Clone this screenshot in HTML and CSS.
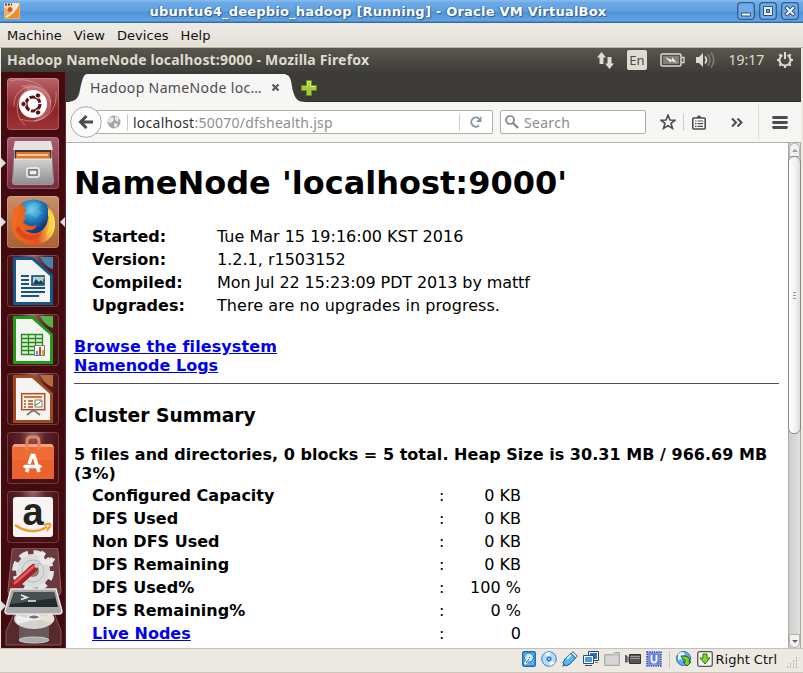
FILE: index.html
```html
<!DOCTYPE html>
<html lang="en">
<head>
<meta charset="utf-8">
<title>ubuntu64_deepbio_hadoop [Running] - Oracle VM VirtualBox</title>
<link rel="stylesheet" href="styles.css">
</head>
<body>
<div class="window">
  <header class="titlebar">
    <svg class="app-icon" width="16" height="16" viewBox="0 0 16 16"><rect width="16" height="16" fill="#e9ad68"/><path d="M0 0h16L9 8 5 8 0 4z" fill="#f7dfb8"/><path d="M1 14l4-4 4 1 6-9v13H1z" fill="#ee8b24"/><path d="M4 5l3 4 7-7M2 14l5-3 6-7" stroke="#fff2d6" stroke-width="2" fill="none"/><circle cx="6" cy="6.500" r="2.500" fill="#e34a1c"/><path d="M1 1.500h7" stroke="#444" stroke-width="2" stroke-dasharray="2 1"/></svg>
    <span class="title">ubuntu64_deepbio_hadoop [Running] - Oracle VM VirtualBox</span>
    <div class="controls">
      <svg width="18" height="18" viewBox="0 0 18 18"><rect class="ctl" x=".7" y=".7" width="16.600" height="16.600" rx="3"/><rect x="4.500" y="11" width="9" height="3" fill="#fff" stroke="#2b527d"/></svg>
      <svg width="18" height="18" viewBox="0 0 18 18"><rect class="ctl" x=".7" y=".7" width="16.600" height="16.600" rx="3"/><path d="M4.500 4.500h9v9h-9zM7.500 7.500v3h3v-3z" fill="#e4effb" stroke="#2b527d" fill-rule="evenodd"/></svg>
      <svg width="18" height="18" viewBox="0 0 18 18"><rect class="ctl" x=".7" y=".7" width="16.600" height="16.600" rx="3"/><path d="M6 6l6 6m0-6l-6 6" stroke="#2b527d" stroke-width="4" stroke-linecap="square"/><path d="M6 6l6 6m0-6l-6 6" stroke="#fff" stroke-width="2" stroke-linecap="square"/></svg>
    </div>
  </header>
  <nav class="menubar"><span>Machine</span><span>View</span><span>Devices</span><span>Help</span></nav>
  <div class="guest">
    <div class="panel">
      <span class="panel-title">Hadoop NameNode localhost:9000 - Mozilla Firefox</span>
      <div class="indicators">
        <svg class="net" width="18" height="18" viewBox="0 0 18 18"><path d="M5.500 0L10 5.500H7.500V12h-4V5.500H1zM13.500 17L9 11.500h2.500V5h4v6.500H18z" fill="#dfdbd2"/></svg>
        <span class="lang">En</span>
        <svg class="battery" width="25" height="14" viewBox="0 0 25 14"><rect x="1" y="1" width="20" height="12" rx="1.500" fill="none" stroke="#dfdbd2" stroke-width="1.500"/><rect x="3" y="3" width="16" height="8" fill="#817f77"/><path d="M22 4.500h2v5h-2" fill="none" stroke="#dfdbd2" stroke-width="1.300"/><path d="M5 4l7 3V4l5 6-6-2v2z" fill="#eeeae2"/></svg>
        <svg class="sound" width="21" height="18" viewBox="0 0 21 18"><path d="M1 6h3l4-4v14l-4-4H1z" fill="#dfdbd2"/><path d="M10 5.500q3 3.500 0 7" fill="none" stroke="#dfdbd2" stroke-width="1.800"/><path d="M13 3.500q4 5.500 0 11M16 1.500q5.500 7.500 0 15" fill="none" stroke="#807d75" stroke-width="1.600"/></svg>
        <span class="clock">19:17</span>
        <svg width="18" height="18" viewBox="0 0 18 18"><path d="M6.500 4.200a5.500 5.500 0 1 0 5 0" fill="none" stroke="#dfdbd2" stroke-width="2"/><path d="M9 1v7M1 9h3m10 0h3M3.300 3.300l2 2m7.400 0l2-2M3.300 14.700l2-2m7.400 0l2 2M9 14v3" stroke="#dfdbd2" stroke-width="2"/></svg>
      </div>
    </div>
    <div class="workspace">
      <aside class="launcher">
        <div class="tile red"><svg viewBox="0 0 52 52"><g fill="none" stroke="#e6b0b0" stroke-opacity=".55"><path d="M7 28C6 7 33 2 42 19c5 12-1 22-14 24"/><path d="M3 3c18-5 40 5 41 22M49 14c2 22-16 34-36 27M18 47C7 39 7 18 22 11"/></g><path d="M13 8c16-5 29 2 31 18-2 12-9 17-19 18 18-9 12-27-12-36z" fill="#e5aaa9" opacity=".4"/><circle cx="26" cy="26" r="14" fill="#fff"/><circle cx="26" cy="26" r="7" fill="none" stroke="#61131a" stroke-width="3.200" stroke-dasharray="13 1.660"/><g fill="#61131a" stroke="#fff"><circle cx="16.500" cy="26" r="2.700"/><circle cx="31" cy="17.500" r="2.700"/><circle cx="31" cy="34.500" r="2.700"/></g></svg></div>
        <div class="tile plum"><svg viewBox="0 0 52 52"><defs><linearGradient id="cab" x2="0" y2="1"><stop stop-color="#d2d2d2"/><stop offset="1" stop-color="#8f8f8f"/></linearGradient></defs><path d="M8 5h36l3 39q0 4-3 4H8q-3 0-3-4z" fill="#999"/><path d="M8 4h36l2 9H6z" fill="#e3e3e3"/><path d="M8 13h36v10H8z" fill="#4a3427"/><path d="M9 15h34v7H9z" fill="#db742d"/><path d="M10 18h31" stroke="#ffe4b7" stroke-width="1.500"/><path d="M7 22h38v25H7z" fill="url(#cab)"/><path d="M7 22h38" stroke="#eee"/><rect x="20" y="31" width="12" height="9" rx="2" fill="#aaa" stroke="#e3e3e3" stroke-width="2"/><rect x="22" y="33" width="8" height="5" fill="#eee" stroke="#555"/></svg><i class="run"></i></div>
        <div class="tile tan"><svg viewBox="0 0 52 52"><defs><radialGradient id="globe" cx=".45" cy=".25"><stop stop-color="#78cfee"/><stop offset=".45" stop-color="#258fca"/><stop offset="1" stop-color="#113b7f"/></radialGradient><linearGradient id="fox"><stop stop-color="#f36d20"/><stop offset=".6" stop-color="#e2501f"/><stop offset="1" stop-color="#fff05a"/></linearGradient></defs><circle cx="26.500" cy="23.500" r="20" fill="url(#globe)"/><path d="M27 6l8 2-4 5 4 4-6 5-5-4-8 1 5-8z" fill="#7bcbe8" opacity=".3"/><path d="M6 12c3 0 6-4 11-4-2 3 0 5 3 6l-4 5c5 0 2 5 0 7 4 4 8 5 14 3-1 5-7 6-12 5 9 7 22 2 23-12 2 1 2 3 2 5 2-6 0-13-4-18 7 5 9 12 9 20-1 26-42 27-43 0 0-6 1-12 1-17z" fill="url(#fox)"/><path d="M12 30c3 9 14 13 23 6-5 11-20 11-27-3z" fill="#dd481a"/><path d="M41 12c6 9 6 20-2 29 3-9 4-15 2-21z" fill="#ffd53b"/></svg><i class="run"></i><i class="focus"></i></div>
        <div class="tile dark"><svg viewBox="0 0 52 52"><path d="M6 2h20l20 18v30H6z" fill="#13598a"/><path d="M9 5h16l18 16v26H9z" fill="#f4f4f4"/><path d="M33 2h13v12q-8-2-13-12z" fill="#4884ad"/><path d="M14 21h8M14 25h8M14 29h8M14 33h24M14 37h24M14 41h18" stroke="#185480" stroke-width="2"/><path d="M25 21h12v9H25z" fill="#9fd8f5" stroke="#153d5b" stroke-width="1.500"/><path d="M26 29l3-5 3 3 2-2 3 4z" fill="#223e4b"/><circle cx="36" cy="23" r="1.300" fill="#eec22e"/></svg></div>
        <div class="tile dark"><svg viewBox="0 0 52 52"><path d="M6 2h20l20 18v30H6z" fill="#239b18"/><path d="M9 5h16l18 16v26H9z" fill="#f4f4f4"/><path d="M33 2h13v12q-8-2-13-12z" fill="#55b348"/><path d="M14.500 20.500h21v20h-21zM14 24.500h22M14 28.500h22M14 32.500h22M14 36.500h22M21.500 20v21M28.500 20v21" stroke="#228b19" stroke-width="1.300" fill="#dff2da"/><path d="M27.500 31.500h10v10h-10z" fill="#fff" stroke="#777"/><path d="M29 37h2v4h-2z" fill="#49a4d8"/><path d="M32 33h2v8h-2z" fill="#e33d20"/><path d="M35 36h2v5h-2z" fill="#ef9e20"/></svg></div>
        <div class="tile dark"><svg viewBox="0 0 52 52"><path d="M6 2h20l20 18v30H6z" fill="#a04a1b"/><path d="M9 5h16l18 16v26H9z" fill="#f4f4f4"/><path d="M33 2h13v12q-8-2-13-12z" fill="#b46b3d"/><rect x="14.700" y="20.700" width="23" height="16" fill="#fff4ec" stroke="#b34f25" stroke-width="1.500"/><path d="M17 24h18" stroke="#e66c30" stroke-width="2"/><path d="M17 28h2m2 0h5m-9 3h2m2 0h5m-9 3h2m2 0h5" stroke="#a95028" stroke-width="1.700"/><path d="M28 27h7v7h-7z" fill="#fff" stroke="#777"/><path d="M28 32l3-1 3-3" fill="none" stroke="#299b35"/><path d="M25 37v2m-5 3l5-4h3l5 4" stroke="#777" stroke-width="1.700" fill="none"/></svg></div>
        <div class="tile dark"><svg viewBox="0 0 52 52"><path d="M5 15h42v32H5z" fill="#ee6b35"/><path d="M5 15l2-3h38l2 3z" fill="#f7a27c"/><path d="M5 28h42v19H5z" fill="#e8602d" opacity=".65"/><path d="M20 18V9q0-4 4-4h4q4 0 4 4v9" fill="none" stroke="#e8835c" stroke-width="3"/><path d="M19.500 40l1.500-3.500M22 32l3-8.500h2L32 40" fill="none" stroke="#fff" stroke-width="3.500"/><path d="M18 34.500h15" stroke="#fff" stroke-width="3.500" stroke-linecap="round"/></svg></div>
        <div class="tile dark"><svg viewBox="0 0 52 52"><rect x="6" y="6" width="40" height="40" rx="3" fill="#f5f5f5"/><text x="26" y="34" class="amazon-a">a</text><path d="M8 34q16 11 32 2" fill="none" stroke="#f59a20" stroke-width="2.300"/><path d="M37 34q8-3 6 1l-3 5" fill="none" stroke="#f59a20" stroke-width="2"/></svg></div>
        <div class="stack"><svg viewBox="0 0 64 101" width="64" height="101"><path d="M9 2q0-2 2-2h42q2 0 2 2l3 41q0 4-3 4H8q-3 0-3-4z" fill="#6b3a3e" stroke="#8d6062"/><circle cx="30" cy="23" r="17" fill="#dadada"/><circle cx="30" cy="23" r="18.500" fill="none" stroke="#e5e5e5" stroke-width="5" stroke-dasharray="9 5.530"/><circle cx="30" cy="23" r="11" fill="none" stroke="#bbb"/><circle cx="30" cy="23" r="6" fill="#8e7777"/><path d="M12 37L31 20" stroke="#a51f28" stroke-width="8" stroke-linecap="round"/><path d="M12 35L30 19" stroke="#e25a58" stroke-width="3" stroke-linecap="round"/><path d="M32 19l10-8" stroke="#c9c9c9" stroke-width="4"/><path d="M41 4q-5 7 0 10 6 2 9-4" stroke="#e9e9e9" stroke-width="5" fill="none"/><path d="M13 62L3 83v14h55V83l-8-21z" fill="#572a2e" stroke="#80585a"/><path d="M16 76h30v17H16z" fill="#66595a"/><ellipse cx="31" cy="71" rx="20" ry="10" fill="#d5d3d2"/><path d="M31 70l18-4q5 5 0 9z" fill="#eae2d0"/><path d="M31 72l-17-5q-3 5 1 9z" fill="#eee"/><ellipse cx="31" cy="69" rx="6" ry="2.500" fill="#747070" stroke="#eee" stroke-width="2"/><ellipse cx="31" cy="92" rx="15" ry="3" fill="#aaa" stroke="#ccc"/><path d="M8 41h45l6 22q0 3-3 3H5q-3 0-3-3z" fill="#aaa" stroke="#e7e7e7" stroke-width="1.500"/><path d="M11 44h40l4 15H6z" fill="#242b2c"/><path d="M11 44h40l2 6-45 6z" fill="#495052"/><path d="M18 47l6 2.500-6 2M25 53h8" stroke="#eee" stroke-width="1.700" fill="none"/></svg><i class="run"></i></div>
      </aside>
      <main class="browser">
        <div class="tabstrip">
          <svg class="tab-edge" width="22" height="29" viewBox="0 0 22 29"><path d="M0 29C14 29 13 20 15 12 17 4 18 1 22 1v28z" fill="#f6f6f5"/></svg>
          <div class="tab"><span>Hadoop NameNode loc…</span><svg width="9" height="9" viewBox="0 0 9 9"><path d="M1.500 1.500l6 6m0-6l-6 6" stroke="#5e5e5e" stroke-width="2.300"/></svg></div>
          <svg class="tab-edge" width="23" height="29" viewBox="0 0 23 29"><path d="M0 1C9 1 8 10 10 18s5 11 13 11H0z" fill="#f6f6f5"/></svg>
          <svg class="newtab" width="16" height="16" viewBox="0 0 16 16"><path d="M5.500.5h5v5h5v5h-5v5h-5v-5h-5v-5h5z" fill="#a9cb3b" stroke="#5f8f1e"/><path d="M6.500 6.500v-5h3v5h5" fill="none" stroke="#d9ef83"/></svg>
        </div>
        <div class="toolbar">
          <svg class="back" width="32" height="32" viewBox="0 0 32 32"><circle cx="16" cy="16" r="15.300" fill="#fbfbfb" stroke="#aaa9a5"/><path d="M16.500 10l-6 6 6 6M11 16h12" fill="none" stroke="#4b4b4b" stroke-width="3"/></svg>
          <div class="url">
            <svg width="14" height="14" viewBox="0 0 14 14"><circle cx="7" cy="7" r="6.500" fill="#a5a5a5"/><path d="M2 3l4-1 1 3-3 3-3-1zM8 1l4 2-1 4-3-2zM7 8l4 1-2 4-2-2z" fill="#e8e8e8"/></svg>
            <i class="sep"></i><span class="address">localhost<em>:50070/dfshealth.jsp</em></span><i class="sep"></i>
            <svg width="12" height="12" viewBox="0 0 12 12"><path d="M9 9.500A4.600 4.600 0 1 1 9 2.700" fill="none" stroke="#8796a3" stroke-width="2"/><path d="M11.500 0v6H6z" fill="#8796a3"/></svg>
          </div>
          <div class="search"><svg width="14" height="14" viewBox="0 0 14 14"><circle cx="5" cy="5" r="4" fill="none" stroke="#858585" stroke-width="1.700"/><path d="M8 8l5 5" stroke="#858585" stroke-width="2.300"/></svg><span>Search</span></div>
          <div class="actions">
            <svg width="16" height="16" viewBox="0 0 16 16"><path d="M8 1.200l2 4.800 5 .2-4 3.200 1.500 5L8 11.600l-4.500 2.800 1.500-5L1 6.200 6 6z" fill="none" stroke="#4c4c4c" stroke-width="1.600"/></svg>
            <i class="sep"></i>
            <svg width="14" height="15" viewBox="0 0 14 15"><rect x=".8" y="3" width="12.400" height="11" rx="1" fill="#fff" stroke="#4c4c4c" stroke-width="1.600"/><path d="M4 3l3-3 3 3" fill="#4c4c4c"/><path d="M3 6h1.500m1 0H11m-8 2.700h1.500m1 0H11m-8 2.700h1.500m1 0H11" stroke="#4c4c4c" stroke-width="1.200"/></svg>
            <svg class="more" width="12" height="9" viewBox="0 0 12 9"><path d="M1 .5l4 4-4 4M6.500.5l4 4-4 4" fill="none" stroke="#4c4c4c" stroke-width="2"/></svg>
            <i class="divider"></i>
            <svg class="burger" width="16" height="13" viewBox="0 0 16 13"><path d="M1.500 1.500h13m-13 5h13m-13 5h13" stroke="#4c4c4c" stroke-width="2.800" stroke-linecap="round"/></svg>
          </div>
        </div>
        <div class="viewport">
          <article class="page">
            <h1>NameNode 'localhost:9000'</h1>
            <table class="info">
              <tr><th>Started:</th><td>Tue Mar 15 19:16:00 KST 2016</td></tr>
              <tr><th>Version:</th><td>1.2.1, r1503152</td></tr>
              <tr><th>Compiled:</th><td class="tight">Mon Jul 22 15:23:09 PDT 2013 by mattf</td></tr>
              <tr><th>Upgrades:</th><td class="loose">There are no upgrades in progress.</td></tr>
            </table>
            <div class="links"><a class="browse" href="#">Browse the filesystem</a><br><a href="#">Namenode Logs</a></div>
            <hr>
            <h3>Cluster Summary</h3>
            <p class="heap">5 files and directories, 0 blocks = 5 total. Heap Size is 30.31 MB / 966.69 MB (3%)</p>
            <table class="summary">
              <tr><th>Configured Capacity</th><td>:</td><td>0 KB</td></tr>
              <tr><th>DFS Used</th><td>:</td><td>0 KB</td></tr>
              <tr><th>Non DFS Used</th><td>:</td><td>0 KB</td></tr>
              <tr><th>DFS Remaining</th><td>:</td><td>0 KB</td></tr>
              <tr><th>DFS Used%</th><td>:</td><td>100 %</td></tr>
              <tr><th>DFS Remaining%</th><td>:</td><td>0 %</td></tr>
              <tr><th><a href="#">Live Nodes</a></th><td>:</td><td>0</td></tr>
            </table>
          </article>
          <div class="scrollbar"><div class="arrow up"><i></i></div><div class="thumb"><i></i><i></i><i></i></div><div class="arrow down"><i></i></div></div>
        </div>
      </main>
    </div>
  </div>
  <footer class="statusbar">
    <svg width="14" height="16" viewBox="0 0 14 16"><rect x=".7" y=".7" width="12.600" height="14.600" rx="1.500" fill="#56b0ee" stroke="#1470bd" stroke-width="1.400"/><circle cx="7" cy="6.500" r="4.500" fill="#c5e7fc" stroke="#2277b8"/><path d="M3 13l5-7" stroke="#fff" stroke-width="2.500"/><path d="M4 12l3-4M7 6.500h1" stroke="#1a5d95"/></svg>
    <svg width="16" height="16" viewBox="0 0 16 16"><circle cx="8" cy="8" r="7.300" fill="#b7dcf7" stroke="#3584d2"/><path d="M8 8L4 2l5-1zM8 8l6 4-5 3z" fill="#fff"/><circle cx="8" cy="8" r="3" fill="#68b7ef"/><circle cx="8" cy="8" r="1.500" fill="#fff" stroke="#155099"/></svg>
    <svg width="16" height="16" viewBox="0 0 16 16"><path d="M11 .7l4.300 4.300-2 2L9 2.700z" fill="#eee" stroke="#555"/><path d="M9 2.500L13.500 7 8 13q-4 3-6 1-2-2 1-6z" fill="#54b9f5" stroke="#1159a2"/><path d="M5 8l4-4" stroke="#c4edff" stroke-width="2"/><path d="M2.500 13.500L.7 15.300" stroke="#2965a2" stroke-width="1.500"/></svg>
    <svg width="16" height="16" viewBox="0 0 16 16"><path d="M5.500.5h10v9h-10z" fill="#fff" stroke="#345"/><path d="M7 2h7v6H7z" fill="#2b74c6"/><path d="M.5 4.500h10v8H.5z" fill="#fff" stroke="#235080"/><path d="M2 6h7v5H2z" fill="#4e9be6"/><path d="M2 14.500h7" stroke="#444"/><path d="M12 11.500h3" stroke="#777"/></svg>
    <svg width="16" height="16" viewBox="0 0 16 16"><path d="M.5 14.500v-11h8l2-2h5v13z" fill="#c7c7c7" stroke="#aaa"/><path d="M2 5h12v8H2z" fill="#d6d6d6"/></svg>
    <svg width="16" height="16" viewBox="0 0 16 16"><path d="M4.500 3.500h11v9h-11z" fill="#555" stroke="#333"/><path d="M5 5.500h10M5 7.500h10" stroke="#999"/><path d="M0 4l4 2v5l-4 1z" fill="#888"/><path d="M1 4v7" stroke="#333"/></svg>
    <svg width="16" height="16" viewBox="0 0 16 16"><rect x="1" y="1" width="14" height="14" fill="#9caaf0" stroke="#3045a3" stroke-width="1.500" stroke-dasharray="1.300 1"/><rect x="2.500" y="2.500" width="11" height="11" fill="#6b80de"/><path d="M5.500 4v5q0 2.500 2.500 2.500t2.500-2.500V4" fill="none" stroke="#fff" stroke-width="1.800"/></svg>
    <i class="sep"></i>
    <svg width="16" height="16" viewBox="0 0 16 16"><circle cx="7.500" cy="7.500" r="7" fill="#5fb2e9" stroke="#276fac"/><path d="M2 3q5-4 7 0L6 8 2 9z" fill="#e1f3fb"/><path d="M5 5l5 0q5 2 3 6l2 0-4 4-4-4h2q1-2-2-3z" fill="#7dcc35" stroke="#185b1b"/></svg>
    <svg class="host" width="16" height="16" viewBox="0 0 16 16"><rect x=".7" y=".7" width="14.600" height="14.600" rx="2" fill="#f4f4f4" stroke="#555" stroke-width="1.300"/><path d="M6 3h4v4h3l-5 6-5-6h3z" fill="#8bd324" stroke="#2c7910"/></svg>
    <span class="hostkey">Right Ctrl</span>
    <svg class="grip" width="12" height="12" viewBox="0 0 12 12"><path d="M10 1h1M7 4h1m2 0h1M4 7h1m2 0h1m2 0h1M1 10h1m2 0h1m2 0h1m2 0h1" stroke="#a9a499" stroke-width="1.500"/></svg>
  </footer>
</div>
</body>
</html>
```
FILE: styles.css
```css
* { box-sizing: border-box; }
body { margin: 0; width: 803px; height: 673px; overflow: hidden; background: #ece9e2; font-family: "DejaVu Sans", sans-serif; }
svg { display: block; flex: none; }
.window { display: flex; flex-direction: column; height: 673px; }
.titlebar { height: 23px; display: flex; align-items: center; padding: 0 4px; flex: none; background: linear-gradient(#8abcef 0, #6aa9e6 3px, #60a1e1 11px, #5094d7 12px, #62a4e4 21px, #356ca6 22px); }
.titlebar .title { flex: 1; text-align: center; color: #fff; font-size: 13px; font-weight: bold; line-height: 20px; letter-spacing: .22px; text-shadow: 1px 1px 1px #2c5b8c, -1px 0 1px #41719f; padding-right: 1px; white-space: nowrap; }
.app-icon { margin-top: -1px; }
.controls { display: flex; gap: 4px; margin: -1px 0 0; }
.ctl { fill: #6eabea; stroke: #345f8f; stroke-width: 1.3; }
.menubar { height: 25px; flex: none; display: flex; gap: 12px; padding: 1px 7px 0; font-size: 13px; line-height: 24px; letter-spacing: .06px; color: #111; background: linear-gradient(#edeae4, #e5e1d9); border-bottom: 1px solid #b8b5a1; }
.guest { width: 800px; height: 600px; margin-left: 1px; display: flex; flex-direction: column; flex: none; }
.panel { height: 24px; flex: none; display: flex; justify-content: space-between; align-items: center; padding: 0 7px 0 6px; background: linear-gradient(#59574d, #3e3d38); color: #dfdbd2; font-family: "Noto Sans", sans-serif; }
.panel-title { font-size: 14px; font-weight: 700; line-height: 24px; white-space: nowrap; letter-spacing: .18px; }
.indicators { display: flex; align-items: center; }
.net { margin-top: 1px; }
.lang { width: 20px; height: 20px; margin-left: 13px; border-radius: 2px; background: #dfdbd2; color: #4e4c46; font-size: 13px; line-height: 20px; text-align: center; }
.battery { margin-left: 13px; }
.sound { margin-left: 10px; }
.clock { width: 37px; margin: -1px 11px 0 12px; font-size: 14px; text-align: center; }
.workspace { height: 576px; display: flex; }
.launcher { width: 65px; flex: none; padding: 6px 0 0 6px; display: flex; flex-direction: column; gap: 7px; background: #430b0f; border-right: 1px solid #5e3032; overflow: hidden; }
.tile { width: 52px; height: 52px; flex: none; position: relative; border-radius: 4px; box-shadow: inset 0 0 0 1px #ffffff30; }
.tile svg { width: 52px; height: 52px; overflow: visible; }
.red { background: linear-gradient(#b86569, #8f2327 60%, #9c3639); }
.plum { background: linear-gradient(#a85c6c, #792a3c); }
.tan { background: linear-gradient(#c99068, #a96034); }
.dark { background: radial-gradient(ellipse at 50% 0, #946466 0, #5b2428 35%, #480f13 75%); }
.amazon-a { font: bold 38px "Liberation Sans", sans-serif; text-anchor: middle; fill: #222; }
.run, .focus { position: absolute; top: 21px; border: 5px solid transparent; border-right-width: 0; }
.run { left: -6px; border-left-color: #ddd; }
.focus { right: -6px; border-right: 5px solid #ddd; border-left-width: 0; }
.stack { position: relative; margin: -2px 0 0 -6px; padding-left: 2px; }
.stack .run { left: 0; top: 53px; }
.browser { width: 735px; display: flex; flex-direction: column; }
.tabstrip { height: 30px; flex: none; display: flex; align-items: flex-end; background: #3c3b37; border-bottom: 1px solid #2d2c29; font-family: "Noto Sans", sans-serif; }
.tab-edge { margin-bottom: -1px; }
.tab { width: 197px; height: 28px; margin: 0 -1px -1px; display: flex; align-items: center; justify-content: space-between; padding: 0 4px 1px 3px; background: #f6f6f5; color: #4c4c4c; font-size: 14px; letter-spacing: .37px; white-space: nowrap; }
.newtab { margin: 0 0 5px -5px; }
.toolbar { height: 41px; flex: none; display: flex; align-items: center; background: #f6f6f5; border-bottom: 1px solid #b2b2a7; padding-left: 4px; font-family: "Noto Sans", sans-serif; }
.back { position: relative; z-index: 1; }
.url { width: 407px; height: 24px; margin-left: -16px; padding: 0 10px 0 20px; display: flex; align-items: center; border: 1px solid #b0aea9; border-radius: 2px; background: #fff; }
.sep { width: 1px; height: 17px; background: #ccc; flex: none; }
.url .sep:first-of-type { margin: 0 5px 0 6px; }
.url .sep:last-of-type { margin-right: 10px; }
.address { flex: 1; color: #333; font-size: 14px; letter-spacing: .25px; white-space: nowrap; }
.address em { color: #8f8f8f; font-style: normal; }
.search { width: 146px; height: 24px; margin-left: 7px; padding-left: 4px; display: flex; align-items: center; gap: 5px; border: 1px solid #b0aea9; border-radius: 2px; background: #fff; font-size: 14px; letter-spacing: .3px; color: #8c8c8c; }
.actions { display: flex; align-items: center; margin-left: 14px; }
.actions .sep { margin: 0 8px 0 7px; }
.more { margin-left: 25px; }
.divider { width: 1px; height: 34px; margin-left: 15px; background: #dcdcda; }
.burger { margin-left: 13px; }
.viewport { height: 505px; display: flex; background: #fff; }
.page { width: 722px; height: 505px; overflow: hidden; padding: 22px 9px 0 8px; font-size: 16px; line-height: 19px; color: #000; }
h1 { margin: 0 0 23px; font-size: 32px; line-height: 37px; }
table { border-collapse: collapse; margin-left: 18px; }
th, td { padding: 0; height: 23px; text-align: left; vertical-align: middle; line-height: 19px; }
.info th { width: 125px; }
.tight { letter-spacing: -.1px; }
.loose { letter-spacing: .06px; }
.links { margin: 20px 0 8px; font-weight: bold; }
.browse { letter-spacing: .11px; }
a { color: #00e; text-decoration: underline; }
hr { margin: 0; height: 1px; border: 0; background: #505050; }
h3 { margin: 21px 0 18px; font-size: 18.72px; line-height: 22px; }
.heap { margin: 0 0 1px; font-weight: bold; letter-spacing: .03px; }
.summary th { width: 347px; }
.summary td:last-child { width: 76.5px; text-align: right; }
.scrollbar { width: 13px; display: flex; flex-direction: column; background: linear-gradient(90deg, #cecdca, #e2e1df); border: 1px solid #aaa; border-width: 0 1px; }
.arrow { height: 14px; flex: none; display: flex; align-items: center; justify-content: center; border: 1px solid #b5b3ae; background: #f2f2f1; border-radius: 6px 6px 0 0; }
.arrow i { border: 3px solid transparent; border-bottom-color: #999; border-top-width: 0; }
.down { margin-top: auto; border-radius: 0 0 6px 6px; }
.down i { border: 3px solid transparent; border-top-color: #666; border-bottom-width: 0; }
.thumb { height: 278px; margin: -1px -1px 0; border: 1px solid #888; border-radius: 6px; background: linear-gradient(90deg, #fff, #f2f2f1 60%, #dedddb); display: flex; flex-direction: column; align-items: center; justify-content: center; gap: 2px; }
.thumb i { width: 3px; height: 1px; background: #999; }
.statusbar { height: 25px; display: flex; align-items: center; padding: 0 5px 3px 0; justify-content: flex-end; gap: 5px; border-top: 1px solid #c9beb2; border-bottom: 1px solid #cfc5b9; font-size: 13px; color: #111; }
.statusbar .sep { margin: 0 1px 0 2px; background: #c7c4bd; }
.hostkey { white-space: nowrap; margin-left: -2px; }
.grip { margin: 7px 0 0 4px; }
```
